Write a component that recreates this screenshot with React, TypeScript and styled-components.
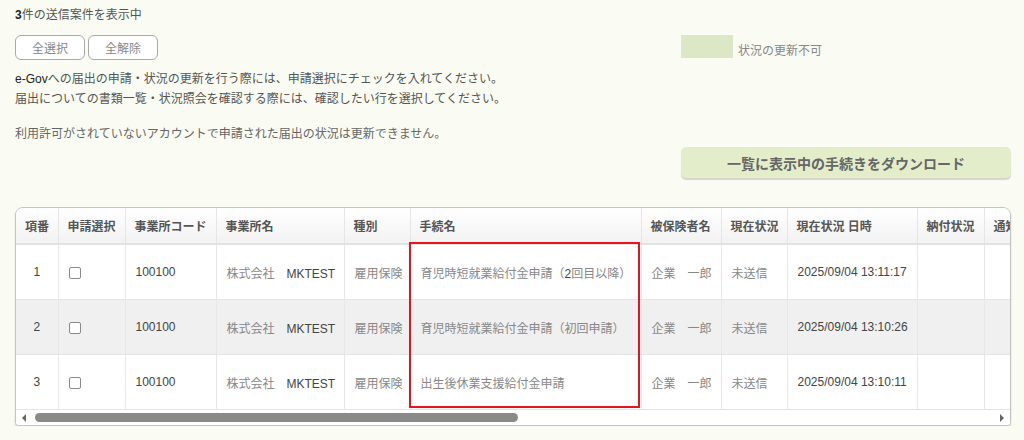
import styled, { createGlobalStyle } from "styled-components";

const GlobalStyle = createGlobalStyle`
    body {
        margin: 0;
        background: #fafcf3;
    }
`;

const Page = styled.div`
    padding: 0 13px 0 15px;
    font-family: "Liberation Sans", "Noto Sans CJK JP", sans-serif;
    font-size: 12px;
    color: #666;
`;

const Top = styled.div`
    display: flex;
    justify-content: space-between;
`;

const LeftCol = styled.div`
    padding-top: 5px;
`;

const Title = styled.p`
    margin: 0;
    line-height: 20px;
    color: #555;
    b {
        color: #222;
    }
`;

const ButtonRow = styled.div`
    display: flex;
    gap: 3px;
    margin-top: 10px;
`;

const SelectButton = styled.button`
    width: 70px;
    height: 25px;
    background: #fff;
    border: 1px solid #a9a9a9;
    border-radius: 6px;
    color: #888;
    font-family: inherit;
    font-size: 12px;
    padding: 0;
`;

const Notes = styled.div`
    margin-top: 9px;
    p {
        margin: 0 0 15px;
        line-height: 20px;
        color: #555;
    }
    .latin {
        color: #222;
    }
    .muted {
        color: #666;
    }
`;

const RightCol = styled.div`
    width: 330px;
    padding-top: 35px;
`;

const Legend = styled.div`
    display: flex;
    align-items: flex-end;
`;

const Swatch = styled.span<{ $color: string }>`
    width: 52px;
    height: 23px;
    background: ${(p) => p.$color};
`;

const LegendLabel = styled.span`
    margin-left: 5px;
    line-height: 14px;
    color: #888;
`;

const DownloadButton = styled.button`
    display: block;
    width: 330px;
    height: 31px;
    margin-top: 89px;
    background: #e4edca;
    border: none;
    border-radius: 5px;
    box-shadow: 0 2px 1px rgba(0, 0, 0, 0.15);
    color: #666;
    font-family: inherit;
    font-size: 14px;
    font-weight: bold;
    padding: 0;
`;

const TableBox = styled.div`
    position: relative;
    margin-top: 29px;
    background: #fff;
    border: 1px solid #c4c4c4;
    border-radius: 8px 8px 4px 4px;
    box-shadow: 0 2px 2px rgba(0, 0, 0, 0.15);
    overflow: hidden;
`;

const Scroller = styled.div`
    overflow: hidden;
`;

const Table = styled.table`
    border-collapse: collapse;
    table-layout: fixed;
    width: 1400px;
`;

const Th = styled.th<{ $center?: boolean }>`
    height: 35px;
    padding: 0 9px;
    text-align: ${(p) => (p.$center ? "center" : "left")};
    background: linear-gradient(#ffffff, #f2f2f2);
    border-right: 1px solid #e6e6e6;
    border-bottom: 2px solid #e2e2e2;
    color: #555;
    font-weight: bold;
    white-space: nowrap;
    overflow: hidden;
`;

const Row = styled.tr<{ $shade?: boolean }>`
    background: ${(p) => (p.$shade ? "#f0f0f0" : "#fff")};
`;

const Td = styled.td<{ $center?: boolean }>`
    height: 54px;
    padding: 0 10px;
    text-align: ${(p) => (p.$center ? "center" : "left")};
    border-right: 1px solid #e8e8e8;
    border-bottom: 1px solid #e4e4e4;
    color: #888;
    white-space: nowrap;
    overflow: hidden;
    .latin {
        color: #444;
    }
`;

const Check = styled.span`
    display: inline-block;
    width: 10px;
    height: 10px;
    border: 1px solid #8a8a8a;
    border-radius: 2px;
    background: #fff;
    vertical-align: middle;
`;

const Highlight = styled.div`
    position: absolute;
    left: 393px;
    top: 34px;
    width: 227px;
    height: 162px;
    border: 2px solid #e8141b;
    pointer-events: none;
`;

const ScrollBar = styled.div`
    display: flex;
    align-items: center;
    height: 15px;
    padding: 0 6px 0 6px;
    background: #fff;
`;

const Arrow = styled.span<{ $dir: "left" | "right" }>`
    width: 0;
    height: 0;
    border-top: 4px solid transparent;
    border-bottom: 4px solid transparent;
    ${(p) =>
        p.$dir === "left"
            ? "border-right: 4px solid #666;"
            : "border-left: 4px solid #666; margin-left: auto;"}
`;

const Thumb = styled.span`
    width: 483px;
    height: 9px;
    margin-left: 9px;
    border-radius: 5px;
    background: #8a8a8a;
`;

const columns = [
    { label: "項番", width: 42, center: true },
    { label: "申請選択", width: 67 },
    { label: "事業所コード", width: 91 },
    { label: "事業所名", width: 128 },
    { label: "種別", width: 66 },
    { label: "手続名", width: 231 },
    { label: "被保険者名", width: 80 },
    { label: "現在状況", width: 66 },
    { label: "現在状況 日時", width: 130 },
    { label: "納付状況", width: 67 },
    { label: "通知書", width: 120 },
    { label: "到達番号", width: 160 },
    { label: "備考", width: 152 },
];

const rows = [
    { no: 1, name: "育児時短就業給付金申請（", extra: "2", rest: "回目以降）", date: "2025/09/04 13:11:17" },
    { no: 2, name: "育児時短就業給付金申請（初回申請）", extra: "", rest: "", date: "2025/09/04 13:10:26" },
    { no: 3, name: "出生後休業支援給付金申請", extra: "", rest: "", date: "2025/09/04 13:10:11" },
];

export default function App() {
    return (
        <>
            <GlobalStyle />
            <Page>
                <Top>
                    <LeftCol>
                        <Title><b>3</b>件の送信案件を表示中</Title>
                        <ButtonRow>
                            <SelectButton>全選択</SelectButton>
                            <SelectButton>全解除</SelectButton>
                        </ButtonRow>
                        <Notes>
                            <p>
                                <span className="latin">e-Gov</span>への届出の申請・状況の更新を行う際には、申請選択にチェックを入れてください。
                                <br />
                                届出についての書類一覧・状況照会を確認する際には、確認したい行を選択してください。
                            </p>
                            <p className="muted">利用許可がされていないアカウントで申請された届出の状況は更新できません。</p>
                        </Notes>
                    </LeftCol>
                    <RightCol>
                        <Legend>
                            <Swatch $color="#dce7c6" />
                            <LegendLabel>状況の更新不可</LegendLabel>
                        </Legend>
                        <DownloadButton>一覧に表示中の手続きをダウンロード</DownloadButton>
                    </RightCol>
                </Top>

                <TableBox>
                    <Scroller>
                        <Table>
                            <colgroup>
                                {columns.map((c) => (
                                    <col key={c.label} style={{ width: c.width }} />
                                ))}
                            </colgroup>
                            <thead>
                                <tr>
                                    {columns.map((c) => (
                                        <Th key={c.label} $center={c.center}>{c.label}</Th>
                                    ))}
                                </tr>
                            </thead>
                            <tbody>
                                {rows.map((r) => (
                                    <Row key={r.no} $shade={r.no === 2}>
                                        <Td $center><span className="latin">{r.no}</span></Td>
                                        <Td><Check /></Td>
                                        <Td><span className="latin">100100</span></Td>
                                        <Td>株式会社　<span className="latin">MKTEST</span></Td>
                                        <Td>雇用保険</Td>
                                        <Td>
                                            {r.name}
                                            {r.extra && <span className="latin">{r.extra}</span>}
                                            {r.rest}
                                        </Td>
                                        <Td>企業　一郎</Td>
                                        <Td>未送信</Td>
                                        <Td><span className="latin">{r.date}</span></Td>
                                        <Td />
                                        <Td />
                                        <Td />
                                        <Td />
                                    </Row>
                                ))}
                            </tbody>
                        </Table>
                    </Scroller>
                    <ScrollBar>
                        <Arrow $dir="left" />
                        <Thumb />
                        <Arrow $dir="right" />
                    </ScrollBar>
                    <Highlight />
                </TableBox>
            </Page>
        </>
    );
}
